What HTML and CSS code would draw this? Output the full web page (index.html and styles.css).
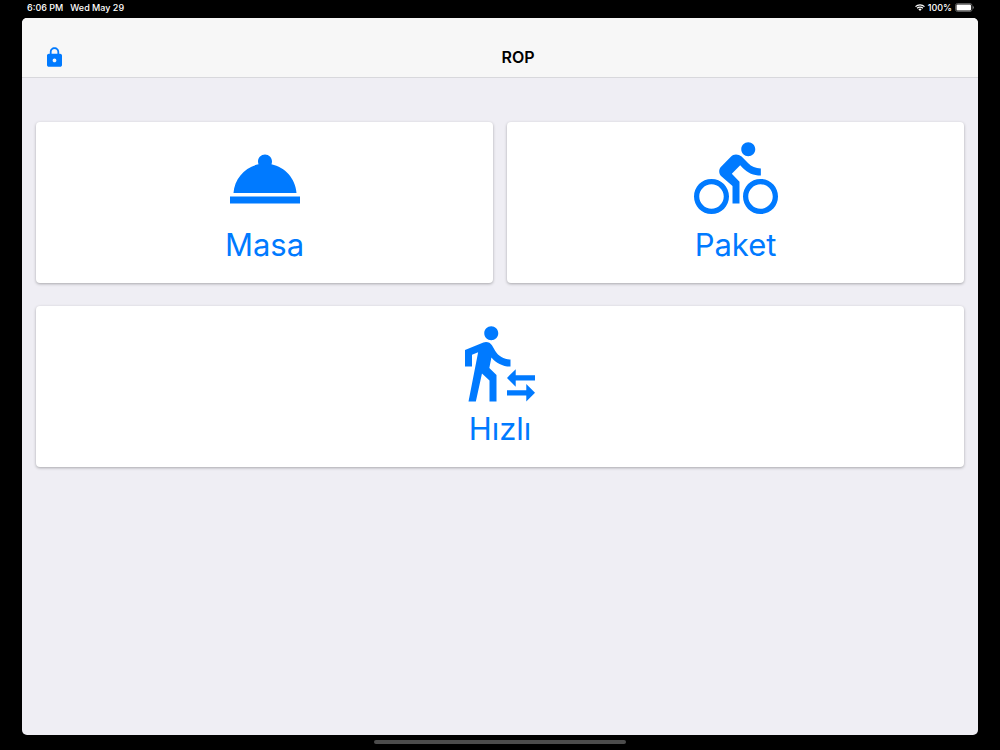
FILE: index.html
```html
<!DOCTYPE html>
<html lang="tr">
<head>
  <meta charset="UTF-8" />
  <meta name="viewport" content="width=device-width, initial-scale=1.0"/>
  <title>ROP</title>
  <link rel="stylesheet" href="styles.css">
</head>
<body>
  <div class="status-bar">
    <div class="status-left">
      <span>6:06 PM</span>
      <span>Wed May 29</span>
    </div>
    <div class="status-right">
      <svg class="wifi" viewBox="0 0 20 14" aria-hidden="true">
        <path d="M1 5.2a12.8 12.8 0 0 1 18 0M4.2 8.5a8.2 8.2 0 0 1 11.6 0" fill="none" stroke="#fff" stroke-width="2.5"/>
        <path d="M10 14L6.7 10.7a4.7 4.7 0 0 1 6.6 0z" fill="#fff"/>
      </svg>
      <span>100%</span>
      <svg class="battery" viewBox="0 0 38 18" aria-hidden="true">
        <rect x="1" y="1" width="33" height="16" rx="4" fill="none" stroke="#777" stroke-width="1.5"/>
        <rect x="3" y="3" width="29" height="12" rx="2" fill="#fff"/>
        <path d="M35.5 6c3 1 3 5 0 6z" fill="#777"/>
      </svg>
    </div>
  </div>

  <div class="app">
    <header class="toolbar">
      <button class="lock-btn" aria-label="Kilit">
        <svg viewBox="0 0 512 512" aria-hidden="true">
          <path d="M376 186h-20v-40c0-55-45-100-100-100S156 91 156 146v40h-20c-22 0-40 18-40 40v200c0 22 18 40 40 40h240c22 0 40-18 40-40V226c0-22-18-40-40-40zM256 368c-22 0-40-18-40-40s18-40 40-40 40 18 40 40-18 40-40 40zm62-182H194v-40c0-34 28-62 62-62s62 28 62 62v40z"/>
        </svg>
      </button>
      <h1>ROP</h1>
    </header>

    <main class="menu">
      <button class="card">
        <svg viewBox="0 0 24 24" aria-hidden="true">
          <path d="M2 17h20v2H2zm11.84-9.21c.1-.24.16-.51.16-.79 0-1.1-.9-2-2-2s-2 .9-2 2c0 .28.06.55.16.79C6.25 8.6 3.27 11.93 3 16h18c-.27-4.07-3.25-7.4-7.16-8.21z"/>
        </svg>
        <span>Masa</span>
      </button>

      <button class="card">
        <svg viewBox="0 0 24 24" aria-hidden="true">
          <path d="M15.5 5.5c1.1 0 2-.9 2-2s-.9-2-2-2-2 .9-2 2 .9 2 2 2zM5 12c-2.8 0-5 2.2-5 5s2.2 5 5 5 5-2.2 5-5-2.2-5-5-5zm0 8.5c-1.9 0-3.5-1.6-3.5-3.5s1.6-3.5 3.5-3.5 3.5 1.6 3.5 3.5-1.6 3.5-3.5 3.5zm5.8-10l2.4-2.4.8.8c1.3 1.3 3 2.1 5.1 2.1V9c-1.5 0-2.7-.6-3.6-1.5l-1.9-1.9c-.5-.4-1-.6-1.6-.6s-1.1.2-1.4.6L7.8 8.4c-.4.4-.6.9-.6 1.4 0 .6.2 1.1.6 1.4L11 14v5h2v-6.2l-2.2-2.3zM19 12c-2.8 0-5 2.2-5 5s2.2 5 5 5 5-2.2 5-5-2.2-5-5-5zm0 8.5c-1.9 0-3.5-1.6-3.5-3.5s1.6-3.5 3.5-3.5 3.5 1.6 3.5 3.5-1.6 3.5-3.5 3.5z"/>
        </svg>
        <span>Paket</span>
      </button>

      <button class="card wide">
        <svg viewBox="0 0 24 24" aria-hidden="true">
          <path d="M16.49 15.5v-1.75L14 16.25l2.49 2.5V17H22v-1.5h-5.51zm3.02 4.25H14v1.5h5.51V23L22 20.5 19.51 18v1.75zM9.5 5.5c1.1 0 2-.9 2-2s-.9-2-2-2-2 .9-2 2 .9 2 2 2zM5.75 8.9L3 23h2.1l1.75-8L9 17v6h2v-7.55L8.95 13.4l.6-3C10.85 12 12.8 13 15 13v-2c-1.85 0-3.45-1-4.35-2.45l-.95-1.6C9.35 6.35 8.7 6 8 6c-.25 0-.5.05-.75.15L2 8.3V13h2V9.65l1.75-.75"/>
        </svg>
        <span>Hızlı</span>
      </button>
    </main>
  </div>

  <div class="home-bar"></div>
</body>
</html>
```
FILE: styles.css
```css
* {
  box-sizing: border-box;
  margin: 0;
  padding: 0;
  font-family: Inter, 'Liberation Sans', sans-serif;
}

body {
  background: #000;
  min-height: 100vh;
  display: flex;
  flex-direction: column;
  padding: 0 22px;
}

.status-bar {
  display: flex;
  justify-content: space-between;
  align-items: center;
  height: 18px;
  padding: 0 4px 3px 5px;
  color: #fff;
  font-size: 9px;
  font-weight: 500;
}

.status-left {
  display: flex;
  gap: 7px;
}

.status-right {
  display: flex;
  align-items: center;
  gap: 3px;
}

.wifi {
  width: 10px;
  height: 7px;
}

.battery {
  width: 19px;
  height: 9px;
}

.app {
  flex: 1;
  background: #efeef4;
  border-radius: 5px;
  overflow: hidden;
}

.toolbar {
  display: flex;
  align-items: center;
  height: 60px;
  padding: 18px 9px 0 20px;
  background: #f7f7f7;
  border-bottom: 1px solid #d8d8dc;
}

.toolbar h1 {
  flex: 1;
  text-align: center;
  font-size: 16px;
  font-weight: 600;
  color: #000;
}

.lock-btn {
  display: flex;
  border: none;
  background: none;
  cursor: pointer;
}

.lock-btn svg {
  width: 25px;
  height: 24px;
  fill: #007aff;
}

.menu {
  display: grid;
  grid-template-columns: 1fr 1fr;
  gap: 23px 14px;
  padding: 44px 14px;
}

.card {
  display: flex;
  flex-direction: column;
  align-items: center;
  padding: 15px 16px 14px;
  border: none;
  border-radius: 4px;
  background: #fff;
  box-shadow: 0 1px 3px rgba(0, 0, 0, 0.3);
  color: #007aff;
  font-size: 31px;
  line-height: 48px;
  cursor: pointer;
}

.card svg {
  width: 84px;
  height: 84px;
  fill: #007aff;
}

.wide {
  grid-column: span 2;
}

.home-bar {
  width: 252px;
  height: 4px;
  margin: 5px auto 6px;
  border-radius: 2px;
  background: #4c4c4c;
}
```
